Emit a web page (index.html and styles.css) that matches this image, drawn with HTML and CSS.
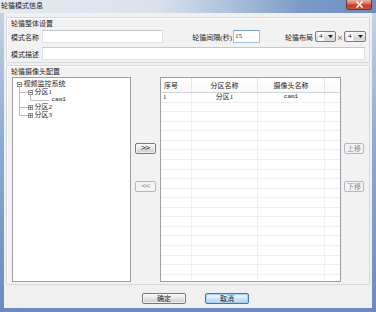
FILE: index.html
```html
<!DOCTYPE html>
<html>
<head>
<meta charset="utf-8">
<title>轮循模式信息</title>
<link rel="stylesheet" href="styles.css">
</head>
<body>
<div class="window">
  <div class="titlebar">
    <span class="title">轮循模式信息</span>
    <span class="close"><svg width="9" height="7" viewBox="0 0 9 7"><path d="M1.5 0.5 L7.5 6.5 M7.5 0.5 L1.5 6.5" stroke="#fff" stroke-width="1.6"/></svg></span>
  </div>
  <div class="frame">
    <div class="client">
      <section class="group group-general">
        <div class="group-title">轮循整体设置</div>
        <div class="form-row">
          <span class="lbl lbl-main">模式名称</span>
          <div class="textbox tb-name"></div>
          <span class="lbl lbl-interval">轮循间隔(秒)</span>
          <div class="textbox tb-interval focused">15</div>
          <span class="lbl lbl-layout">轮循布局</span>
          <div class="combo combo-a"><span class="combo-val">4</span><svg class="combo-arrow" width="5" height="3" viewBox="0 0 5 3"><path d="M0 0 H5 L2.5 3 Z" fill="#222"/></svg></div>
          <span class="times">×</span>
          <div class="combo combo-b"><span class="combo-val">4</span><svg class="combo-arrow" width="5" height="3" viewBox="0 0 5 3"><path d="M0 0 H5 L2.5 3 Z" fill="#222"/></svg></div>
        </div>
        <div class="form-row row-desc">
          <span class="lbl lbl-main">模式描述</span>
          <div class="textbox tb-desc"></div>
        </div>
      </section>

      <section class="group group-camera">
        <div class="group-title">轮循摄像头配置</div>
        <div class="camera-body">
          <div class="tree">
            <div class="tree-row">
              <svg class="guide" width="10" height="8" viewBox="0 0 10 8"><line x1="6.5" y1="6" x2="6.5" y2="8" stroke="#bcbcbc"/><rect x="4.5" y="2.5" width="4" height="4" fill="#fff" stroke="#8f8f8f"/><line x1="5.5" y1="4.5" x2="7.5" y2="4.5" stroke="#333"/><line x1="8.5" y1="4.5" x2="10" y2="4.5" stroke="#bcbcbc"/></svg>
              <span class="node-text">视频监控系统</span>
            </div>
            <div class="tree-row">
              <svg class="guide" width="21" height="8" viewBox="0 0 21 8"><line x1="6.5" y1="0" x2="6.5" y2="8" stroke="#bcbcbc"/><line x1="6.5" y1="4.5" x2="15" y2="4.5" stroke="#bcbcbc"/><line x1="17.5" y1="6" x2="17.5" y2="8" stroke="#bcbcbc"/><rect x="15.5" y="2.5" width="4" height="4" fill="#fff" stroke="#8f8f8f"/><line x1="16.5" y1="4.5" x2="18.5" y2="4.5" stroke="#333"/></svg>
              <span class="node-text">分区1</span>
            </div>
            <div class="tree-row">
              <svg class="guide" width="37" height="8" viewBox="0 0 37 8"><line x1="6.5" y1="0" x2="6.5" y2="8" stroke="#bcbcbc"/><line x1="17.5" y1="0" x2="17.5" y2="4.5" stroke="#bcbcbc"/><line x1="17.5" y1="4.5" x2="36" y2="4.5" stroke="#bcbcbc"/></svg>
              <span class="node-text leaf">cam1</span>
            </div>
            <div class="tree-row">
              <svg class="guide" width="21" height="8" viewBox="0 0 21 8"><line x1="6.5" y1="0" x2="6.5" y2="8" stroke="#bcbcbc"/><line x1="6.5" y1="4.5" x2="15" y2="4.5" stroke="#bcbcbc"/><rect x="15.5" y="2.5" width="4" height="4" fill="#fff" stroke="#8f8f8f"/><line x1="16.5" y1="4.5" x2="18.5" y2="4.5" stroke="#333"/><line x1="17.5" y1="3.5" x2="17.5" y2="5.5" stroke="#333"/></svg>
              <span class="node-text">分区2</span>
            </div>
            <div class="tree-row">
              <svg class="guide" width="21" height="8" viewBox="0 0 21 8"><line x1="6.5" y1="0" x2="6.5" y2="4.5" stroke="#bcbcbc"/><line x1="6.5" y1="4.5" x2="15" y2="4.5" stroke="#bcbcbc"/><rect x="15.5" y="2.5" width="4" height="4" fill="#fff" stroke="#8f8f8f"/><line x1="16.5" y1="4.5" x2="18.5" y2="4.5" stroke="#333"/><line x1="17.5" y1="3.5" x2="17.5" y2="5.5" stroke="#333"/></svg>
              <span class="node-text">分区3</span>
            </div>
          </div>

          <div class="move-col">
            <button class="btn btn-small">&gt;&gt;</button>
            <button class="btn btn-small" disabled>&lt;&lt;</button>
          </div>

          <div class="grid">
            <div class="grid-head">
              <div class="hc hc-left">序号</div>
              <div class="hc">分区名称</div>
              <div class="hc">摄像头名称</div>
              <div class="hc"></div>
            </div>
            <div class="grid-body">
              <div class="gr"><div class="gc gc-left">1</div><div class="gc">分区1</div><div class="gc gc-latin">cam1</div><div class="gc"></div></div>
              <div class="gr"><div class="gc"></div><div class="gc"></div><div class="gc"></div><div class="gc"></div></div>
              <div class="gr"><div class="gc"></div><div class="gc"></div><div class="gc"></div><div class="gc"></div></div>
              <div class="gr"><div class="gc"></div><div class="gc"></div><div class="gc"></div><div class="gc"></div></div>
              <div class="gr"><div class="gc"></div><div class="gc"></div><div class="gc"></div><div class="gc"></div></div>
              <div class="gr"><div class="gc"></div><div class="gc"></div><div class="gc"></div><div class="gc"></div></div>
              <div class="gr"><div class="gc"></div><div class="gc"></div><div class="gc"></div><div class="gc"></div></div>
              <div class="gr"><div class="gc"></div><div class="gc"></div><div class="gc"></div><div class="gc"></div></div>
              <div class="gr"><div class="gc"></div><div class="gc"></div><div class="gc"></div><div class="gc"></div></div>
              <div class="gr"><div class="gc"></div><div class="gc"></div><div class="gc"></div><div class="gc"></div></div>
              <div class="gr"><div class="gc"></div><div class="gc"></div><div class="gc"></div><div class="gc"></div></div>
              <div class="gr"><div class="gc"></div><div class="gc"></div><div class="gc"></div><div class="gc"></div></div>
              <div class="gr"><div class="gc"></div><div class="gc"></div><div class="gc"></div><div class="gc"></div></div>
              <div class="gr"><div class="gc"></div><div class="gc"></div><div class="gc"></div><div class="gc"></div></div>
              <div class="gr"><div class="gc"></div><div class="gc"></div><div class="gc"></div><div class="gc"></div></div>
              <div class="gr"><div class="gc"></div><div class="gc"></div><div class="gc"></div><div class="gc"></div></div>
              <div class="gr"><div class="gc"></div><div class="gc"></div><div class="gc"></div><div class="gc"></div></div>
              <div class="gr"><div class="gc"></div><div class="gc"></div><div class="gc"></div><div class="gc"></div></div>
              <div class="gr"><div class="gc"></div><div class="gc"></div><div class="gc"></div><div class="gc"></div></div>
              <div class="gr"><div class="gc"></div><div class="gc"></div><div class="gc"></div><div class="gc"></div></div>
            </div>
          </div>

          <div class="order-col">
            <button class="btn btn-order" disabled>上移</button>
            <button class="btn btn-order" disabled>下移</button>
          </div>
        </div>
      </section>

      <div class="footer">
        <button class="btn btn-footer">确定</button>
        <button class="btn btn-footer btn-default">取消</button>
      </div>
    </div>
  </div>
</div>
</body>
</html>
```

FILE: styles.css
```css
* { box-sizing: border-box; margin: 0; padding: 0; }

html, body {
  width: 376px;
  height: 312px;
  overflow: hidden;
}

body {
  font-family: "Liberation Serif", "Noto Sans CJK SC", serif;
  font-size: 7px;
  color: #222;
  background: #6d8fc0;
}

.window {
  width: 376px;
  height: 312px;
  display: flex;
  flex-direction: column;
  background: linear-gradient(to bottom, #c9d6e6 0%, #8eabd2 45%, #6a8bbf 100%);
}

/* title bar */
.titlebar {
  height: 13px;
  flex: none;
  display: flex;
  align-items: flex-start;
  background: linear-gradient(to right, #e3e9f0 0%, #d9e2ec 42%, #a9c0dc 62%, #7b9bc8 80%, #6c8ec1 100%);
}

.title {
  padding: 1px 0 0 1px;
  line-height: 9px;
  font-family: "Noto Sans CJK SC", sans-serif;
  font-size: 7px;
  color: #1b1b1b;
}

.close {
  margin-left: auto;
  margin-right: 4px;
  width: 26px;
  height: 10px;
  border: 1px solid #7a3126;
  border-top: none;
  border-radius: 0 0 3px 3px;
  background: linear-gradient(to bottom, #eab2a3 0%, #d76a55 45%, #c5391f 55%, #d0553b 100%);
  display: flex;
  align-items: center;
  justify-content: center;
}

.frame {
  flex: 1;
  display: flex;
  padding: 0 4px 4px 4px;
}

.client {
  flex: 1;
  display: flex;
  flex-direction: column;
  background: #f0f0f0;
  padding: 4px 2px 0 2px;
}

/* group boxes */
.group {
  border: 1px solid #d5d9dd;
  border-radius: 2px;
  box-shadow: inset 1px 1px 0 #fbfbfb;
  background: #f2f2f2;
  padding: 0 0 2px 4px;
}

.group-title {
  line-height: 10px;
  font-family: "Noto Sans CJK SC", sans-serif;
  color: #1e1e1e;
}

.group-general {
  height: 46px;
}

.group-camera {
  margin-top: 2px;
  height: 220px;
}

/* form rows */
.form-row {
  display: flex;
  align-items: center;
  height: 13px;
  margin-top: 2px;
}

.row-desc {
  margin-top: 4px;
}

.lbl {
  flex: none;
  font-family: "Noto Sans CJK SC", sans-serif;
  white-space: nowrap;
}

.lbl-main { width: 31px; }

.lbl-interval {
  width: 45px;
  margin-left: 25px;
  text-align: right;
  font-family: "Liberation Serif", "Noto Sans CJK SC", serif;
  padding-right: 1px;
}

.lbl-layout {
  width: 33px;
  margin-left: 22px;
  text-align: right;
  padding-right: 2px;
}

.textbox {
  flex: none;
  height: 13px;
  background: #fff;
  border: 1px solid #dbe1e8;
  border-top-color: #c2c8cf;
  line-height: 11px;
  padding-left: 1px;
}

.tb-name { width: 121px; }
.tb-desc { width: 323px; }

.tb-interval {
  width: 27px;
  font-family: "Liberation Serif", serif;
  font-size: 7px;
}

.textbox.focused {
  border-color: #9ec0e2;
  border-top-color: #7aa4cf;
}

.combo {
  flex: none;
  height: 11px;
  display: flex;
  align-items: center;
  border: 1px solid #7d7d7d;
  border-radius: 2px;
  background: linear-gradient(to bottom, #f3f3f3 0%, #e6e6e6 50%, #d6d6d6 51%, #dcdcdc 100%);
  padding: 0 2px;
}

.combo-a { width: 21px; }
.combo-b { width: 22px; }

.combo-val {
  font-family: "Liberation Serif", serif;
  font-size: 7px;
  line-height: 9px;
  background: #fff;
  padding: 0 1px;
}

.combo-arrow {
  margin-left: auto;
}

.times {
  width: 8px;
  text-align: center;
  font-family: "Noto Sans CJK SC", sans-serif;
}

/* camera section */
.camera-body {
  display: flex;
  margin-top: 1px;
  height: 205px;
}

.tree {
  flex: none;
  width: 119px;
  margin-left: 1px;
  background: #fff;
  border: 1px solid #9a9ea5;
  padding-top: 2px;
}

.tree-row {
  display: flex;
  align-items: center;
  height: 7.8px;
}

.guide {
  flex: none;
  display: block;
}

.node-text {
  font-family: "Liberation Serif", "Noto Sans CJK SC", serif;
  font-size: 7px;
  line-height: 8px;
  white-space: nowrap;
  color: #1e1e1e;
  padding-left: 0.5px;
}

.node-text.leaf {
  font-family: "Liberation Mono", monospace;
  font-size: 6px;
  margin-left: 1px;
}

.move-col,
.order-col {
  display: flex;
  flex-direction: column;
  align-items: flex-start;
  padding-top: 66px;
  gap: 27px;
}

.move-col {
  width: 29px;
  flex: none;
  padding-left: 4px;
}

.order-col {
  flex: 1;
  padding-left: 3px;
}

/* buttons */
.btn {
  font-family: "Noto Sans CJK SC", sans-serif;
  font-size: 7px;
  line-height: 9px;
  height: 11px;
  color: #1e1e1e;
  border: 1px solid #7a7a7a;
  border-radius: 2px;
  background: linear-gradient(to bottom, #f4f4f4 0%, #ececec 45%, #dcdcdc 55%, #d2d2d2 100%);
  box-shadow: inset 0 0 0 1px rgba(255,255,255,0.6);
  cursor: default;
}

.btn-small {
  width: 21px;
  font-family: "DejaVu Sans", sans-serif;
  font-size: 7px;
  letter-spacing: -1.5px;
  padding-right: 1px;
}

.btn-order {
  width: 20px;
}

.btn[disabled] {
  color: #8c8c8c;
  border-color: #b4b8bb;
  background: #f4f4f4;
  box-shadow: none;
}

.footer {
  display: flex;
  justify-content: center;
  gap: 19px;
  padding: 8px 0 0 15px;
}

.btn-footer {
  width: 44px;
}

.btn-default {
  border-color: #3d7bad;
  background: linear-gradient(to bottom, #eaf5fc 0%, #dcecf8 45%, #c4e0f4 55%, #b6d8f0 100%);
  box-shadow: inset 0 0 0 1px #9fd2f3;
}

/* list grid */
.grid {
  flex: none;
  width: 181px;
  display: flex;
  flex-direction: column;
  background: #fff;
  border: 1px solid #9a9ea5;
}

.grid-head {
  display: grid;
  grid-template-columns: 31px 66px 67px 1fr;
  height: 15px;
  border-bottom: 1px solid #d5d5d5;
  background: linear-gradient(to bottom, #ffffff 0%, #f7f8f9 100%);
}

.hc {
  border-right: 1px solid #e3e4e6;
  font-family: "Noto Sans CJK SC", sans-serif;
  line-height: 14px;
  text-align: center;
  white-space: nowrap;
}

.hc:last-child,
.gc:last-child {
  border-right: none;
}

.hc-left {
  text-align: left;
  padding-left: 3px;
}

.grid-body {
  flex: 1;
  overflow: hidden;
}

.gr {
  display: grid;
  grid-template-columns: 31px 66px 67px 1fr;
  height: 9.57px;
  border-bottom: 1px solid #efefef;
}

.gc {
  border-right: 1px solid #efefef;
  text-align: center;
  line-height: 8.5px;
  white-space: nowrap;
}

.gc-left {
  text-align: left;
  padding-left: 2px;
}

.gc-latin {
  font-family: "Liberation Mono", monospace;
  font-size: 6px;
}
```
